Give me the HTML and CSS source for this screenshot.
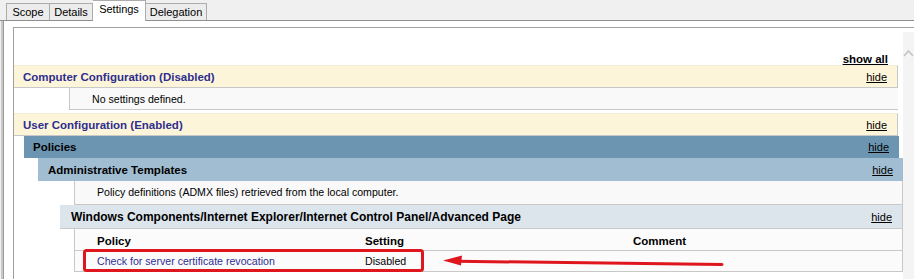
FILE: index.html
```html
<!DOCTYPE html>
<html lang="en">
<head>
    <meta charset="UTF-8">
    <title>Group Policy Settings</title>
    <link rel="stylesheet" href="styles.css">
</head>
<body>

<div class="tabs">
    <div class="tab tab-scope">Scope</div>
    <div class="tab tab-details">Details</div>
    <div class="tab tab-settings active">Settings</div>
    <div class="tab tab-delegation">Delegation</div>
</div>

<div class="page">
    <div class="panel">
        <div class="report">
            <div class="show-all"><a href="#">show all</a></div>

            <div class="section">
                <div class="row row-cfg">
                    <span class="cfg-title">Computer Configuration (Disabled)</span>
                    <a href="#" class="hide">hide</a>
                </div>
                <div class="note note-cfg">No settings defined.</div>
            </div>

            <div class="section">
                <div class="row row-cfg">
                    <span class="cfg-title">User Configuration (Enabled)</span>
                    <a href="#" class="hide">hide</a>
                </div>
                <div class="level-policies">
                    <div class="row row-policies">
                        <span>Policies</span>
                        <a href="#" class="hide">hide</a>
                    </div>
                    <div class="level-admin">
                        <div class="row row-admin">
                            <span>Administrative Templates</span>
                            <a href="#" class="hide">hide</a>
                        </div>
                        <div class="note note-admin">Policy definitions (ADMX files) retrieved from the local computer.</div>
                        <div class="level-ext">
                            <div class="row row-ext">
                                <span>Windows Components/Internet Explorer/Internet Control Panel/Advanced Page</span>
                                <a href="#" class="hide">hide</a>
                            </div>
                            <table class="policy-table">
                                <tr>
                                    <th class="col-policy">Policy</th>
                                    <th class="col-setting">Setting</th>
                                    <th>Comment</th>
                                </tr>
                                <tr>
                                    <td><a href="#" class="policy-link">Check for server certificate revocation</a></td>
                                    <td>Disabled</td>
                                    <td></td>
                                </tr>
                            </table>
                        </div>
                    </div>
                </div>
            </div>
        </div>
        <div class="scrollbar">
            <svg width="11" height="10" viewBox="0 0 11 10"><path d="M1 8 L5.5 3 L10 8" fill="none" stroke="#c4c4c4" stroke-width="1.6"/></svg>
        </div>
    </div>
</div>

<svg class="annotation" width="914" height="279" viewBox="0 0 914 279">
    <rect x="84.5" y="250.5" width="338" height="20" rx="2" fill="none" stroke="#e0161e" stroke-width="3"/>
    <path d="M457 261.2 L722 264.6" stroke="#e0161e" stroke-width="3" stroke-linecap="round"/>
    <polygon points="443,260.5 462,255.5 461,265.5" fill="#e0161e"/>
</svg>

</body>
</html>
```

FILE: styles.css
```css
body {
    margin: 0;
    background: #f0f0f0;
    font-family: "Liberation Sans", Arial, sans-serif;
    font-size: 10.6px;
    color: #000;
    position: relative;
    width: 914px;
    height: 279px;
    overflow: hidden;
}
a {
    color: #000;
}

/* tabs */
.tabs {
    display: flex;
    align-items: flex-end;
    height: 20px;
    padding-left: 6px;
    border-bottom: 1px solid #8e8f8f;
}
.tab {
    height: 16px;
    line-height: 16px;
    border: 1px solid #acacac;
    border-bottom: none;
    border-left: none;
    background: #ececec;
    font-size: 11px;
    text-align: center;
}
.tab-scope { width: 42px; border-left: 1px solid #acacac; }
.tab-details { width: 42px; }
.tab-settings { width: 52px; }
.tab-delegation { width: 60px; }
.tab.active {
    height: 20px;
    line-height: 17px;
    background: #fff;
    margin-bottom: -1px;
    position: relative;
    border-left: none;
}

/* tab page */
.page {
    margin-left: 3px;
    border-left: 1px solid #9a9a9a;
    box-shadow: -2px 0 0 #c8c8c8;
    background: #fff;
    padding: 6px 0 0 9px;
    height: 252px;
}
.panel {
    display: flex;
    border-left: 1px solid #a0a0a0;
    border-top: 1px solid #a0a0a0;
    height: 251px;
    background: #fff;
}
.report {
    width: 889px;
}
.scrollbar {
    width: 11px;
    margin-top: 4px;
    background: #f4f4f4;
    padding-top: 16px;
}
.scrollbar svg {
    display: block;
}

.show-all {
    text-align: right;
    padding: 25px 15px 0 0;
    height: 12px;
    line-height: 12px;
    font-weight: bold;
    font-size: 11.5px;
}

/* rows */
.row {
    display: flex;
    justify-content: space-between;
    align-items: center;
    font-weight: bold;
    font-size: 11.5px;
}
.row .hide {
    font-weight: normal;
    font-size: 11px;
}
.row-cfg {
    margin-right: 5px;
    padding: 0 10px 0 9px;
    background: #fdf5da;
    border-bottom: 1px solid #c8c8c8;
    border-right: 1px solid #c8c8c8;
    border-top: 1px solid #f4eed6;
    box-sizing: border-box;
    height: 23px;
}
.cfg-title {
    color: #2e2e8e;
}
.section {
    margin-bottom: 3px;
}
.note {
    height: 22px;
    line-height: 22px;
    background: #f9f9f9;
    border-left: 1px solid #c8c8c8;
    border-bottom: 1px solid #c8c8c8;
    box-sizing: border-box;
}
.note-cfg {
    margin-left: 55px;
    margin-right: 5px;
    padding-left: 22px;
}

.level-policies {
    margin-left: 10px;
}
.row-policies {
    height: 22px;
    margin-right: 4px;
    padding: 0 10px 0 9px;
    background: #6c95b2;
}
.level-admin {
    margin-left: 14px;
}
.row-admin {
    height: 23px;
    padding: 0 10px 0 10px;
    background: #a1bdd1;
}
.note-admin {
    margin-left: 36px;
    padding-left: 22px;
    height: 24px;
    line-height: 23px;
    border-right: 1px solid #c8c8c8;
}
.level-ext {
    margin-left: 22px;
}
.row-ext {
    height: 24px;
    padding: 0 10px 0 11px;
    background: #dce5ec;
    border-bottom: 1px solid #c8c8c8;
    border-right: 1px solid #c8c8c8;
    box-sizing: border-box;
    font-size: 12px;
}

/* policy table */
.policy-table {
    margin-left: 14px;
    width: calc(100% - 14px);
    border-collapse: collapse;
    background: #fbfbfb;
    border-left: 1px solid #c8c8c8;
    border-right: 1px solid #c8c8c8;
}
.policy-table th, .policy-table td {
    text-align: left;
    padding: 0 0 0 22px;
    height: 21px;
    border-bottom: 1px solid #c8c8c8;
}
.policy-table th {
    font-size: 11.5px;
    height: 18px;
    padding-top: 3px;
}
.policy-table td {
    height: 20px;
}
.col-policy { width: 246px; }
.col-setting { width: 246px; }
.policy-link {
    color: #2e2e96;
    text-decoration: none;
}

.annotation {
    position: absolute;
    left: 0;
    top: 0;
    pointer-events: none;
}
```
